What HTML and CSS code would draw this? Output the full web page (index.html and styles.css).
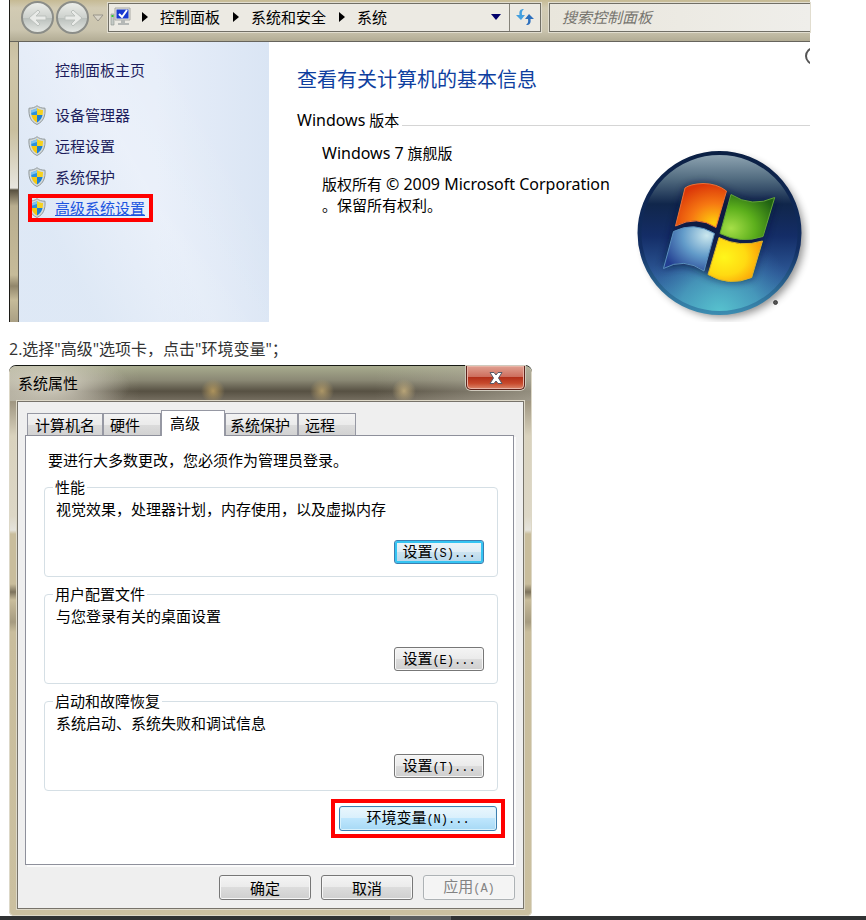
FILE: index.html
```html
<!DOCTYPE html>
<html lang="zh-CN">

<head>
    <meta charset="UTF-8">
    <meta name="viewport" content="width=device-width, initial-scale=1.0">
    <title>环境变量设置</title>
    <link rel="stylesheet" href="styles.css">
</head>

<body>

    <!-- 盾牌图标 -->
    <svg class="defs" width="0" height="0" aria-hidden="true">
        <symbol id="shield" viewBox="0 0 18 20">
            <clipPath id="shieldClip">
                <path d="M9 3 C7 4.500 5 5 3 5 C3 11 4.500 15 9 17.500 C13.500 15 15 11 15 5 C13 5 11 4.500 9 3Z"/>
            </clipPath>
            <path d="M9 .7 C7 2.500 4 3.200 1 3.200 C.5 11 2.500 16.500 9 19.500 C15.500 16.500 17.500 11 17 3.200 C14 3.200 11 2.500 9 .7Z" fill="#d3d9da" stroke="#929a9b"/>
            <g clip-path="url(#shieldClip)">
                <path d="M0 0h9v10H0z" fill="#2b91dc"/>
                <path d="M9 0h9v10H9z" fill="#f6d21f"/>
                <path d="M0 10h9v10H0z" fill="#f4c80f"/>
                <path d="M9 10h9v10H9z" fill="#1d7fd0"/>
                <path d="M3 3 L9 2 V6 L3 8Z" fill="#a4d8f7" opacity=".7"/>
            </g>
        </symbol>
    </svg>

    <div class="article">
        <!-- 系统窗口 -->
        <section class="system">
            <div class="toolbar">
                <button class="nav-button" type="button" aria-label="后退">
                    <svg width="32" height="32" viewBox="0 0 32 32">
                        <path d="M7 16 L16 8 L18 10 L14 14 H24 V18 H14 L18 22 L16 24Z" fill="#e9ebe8" stroke="#bcc1bd"/>
                    </svg>
                </button>
                <button class="nav-button" type="button" aria-label="前进">
                    <svg width="32" height="32" viewBox="0 0 32 32">
                        <path d="M25 16 L16 8 L14 10 L18 14 H8 V18 H18 L14 22 L16 24Z" fill="#e9ebe8" stroke="#bcc1bd"/>
                    </svg>
                </button>
                <button class="history" type="button" aria-label="最近的页面">
                    <svg width="12" height="8" viewBox="0 0 12 8">
                        <path d="M1 1h10L6 7z" fill="#d9d5c8" stroke="#99958a"/>
                    </svg>
                </button>
                <nav class="address">
                    <svg class="computer" width="22" height="20" viewBox="0 0 22 20">
                        <path d="M1 7h3v11H1z" fill="#c5cac7" stroke="#8d938f" stroke-width=".6"/>
                        <path d="M1.500 8h2v2h-2z" fill="#3c3"/>
                        <path d="M5 1h15v12H5z" fill="#e2e3de" stroke="#a9aaa5"/>
                        <path d="M6.500 2.500h12v9h-12z" fill="#1739d1"/>
                        <path d="M9 7l3 3 5-7" fill="none" stroke="#fff" stroke-width="2"/>
                        <path d="M11 13h4v3h4v2H8v-2h3z" fill="#b5b8b6"/>
                    </svg>
                    <svg class="arrow" width="6" height="10" viewBox="0 0 6 10"><path d="M0 0l6 5-6 5z"/></svg>
                    <a href="#">控制面板</a>
                    <svg class="arrow" width="6" height="10" viewBox="0 0 6 10"><path d="M0 0l6 5-6 5z"/></svg>
                    <a href="#">系统和安全</a>
                    <svg class="arrow" width="6" height="10" viewBox="0 0 6 10"><path d="M0 0l6 5-6 5z"/></svg>
                    <a href="#">系统</a>
                    <button class="drop" type="button" aria-label="以前的位置">
                        <svg width="10" height="6" viewBox="0 0 10 6"><path d="M0 0h10L5 6z" fill="#00006b"/></svg>
                    </button>
                    <button class="refresh" type="button" aria-label="刷新">
                        <svg width="18" height="18" viewBox="0 0 18 18">
                            <path d="M8 1 C4 1 3 3 3.500 7 H0 L5 12 L9 7 H6 C5.500 4 6 3 8 1Z" fill="#43a0df"/>
                            <path d="M10 17 C14 17 15 15 14.500 11 H18 L13 6 L9 11 H12 C12.500 14 12 15 10 17Z" fill="#2c6fbd"/>
                        </svg>
                    </button>
                </nav>
                <input class="search" type="search" placeholder="搜索控制面板" aria-label="搜索控制面板">
            </div>

            <div class="system-body">
                <aside class="sidebar">
                    <a class="home" href="#">控制面板主页</a>
                    <ul>
                        <li><a href="#"><svg width="18" height="20"><use href="#shield"/></svg>设备管理器</a></li>
                        <li><a href="#"><svg width="18" height="20"><use href="#shield"/></svg>远程设置</a></li>
                        <li><a href="#"><svg width="18" height="20"><use href="#shield"/></svg>系统保护</a></li>
                        <li><a class="marked" href="#"><svg width="18" height="20"><use href="#shield"/></svg><span>高级系统设置</span></a></li>
                    </ul>
                </aside>
                <div class="info">
                    <h1>查看有关计算机的基本信息</h1>
                    <h2><span class="latin">Windows</span> 版本</h2>
                    <div class="edition">
                        <div class="edition-text">
                            <p><span class="latin">Windows 7</span> 旗舰版</p>
                            <p>版权所有 <span class="latin">© 2009 Microsoft Corporation</span><br>。保留所有权利。</p>
                        </div>
                        <svg class="logo" width="180" height="180" viewBox="0 0 180 180" role="img" aria-label="Windows">
                            <defs>
                                <linearGradient id="orb" x1="0" y1="0" x2="0" y2="1">
                                    <stop offset="0" stop-color="#94a9b6"/>
                                    <stop offset=".16" stop-color="#536d81"/>
                                    <stop offset=".32" stop-color="#10264b"/>
                                    <stop offset=".52" stop-color="#142d67"/>
                                    <stop offset=".75" stop-color="#2c5795"/>
                                    <stop offset="1" stop-color="#3f8fb8"/>
                                </linearGradient>
                                <radialGradient id="glow" cx=".5" cy="1" r=".5">
                                    <stop offset="0" stop-color="#58c4cf"/>
                                    <stop offset=".5" stop-color="#4da6c2" stop-opacity=".7"/>
                                    <stop offset="1" stop-color="#3a70ac" stop-opacity="0"/>
                                </radialGradient>
                                <linearGradient id="rim" x1="0" y1="0" x2="0" y2="1">
                                    <stop offset="0" stop-color="#0b2044"/>
                                    <stop offset=".6" stop-color="#122e63"/>
                                    <stop offset="1" stop-color="#3b8bb0"/>
                                </linearGradient>
                                <radialGradient id="red" cx=".75" cy=".9" r=".9">
                                    <stop offset="0" stop-color="#ffd00c"/>
                                    <stop offset=".5" stop-color="#f67812"/>
                                    <stop offset="1" stop-color="#db3709"/>
                                </radialGradient>
                                <radialGradient id="green" cx=".2" cy=".75" r=".9">
                                    <stop offset="0" stop-color="#a6df48"/>
                                    <stop offset=".5" stop-color="#5caf1c"/>
                                    <stop offset="1" stop-color="#216313"/>
                                </radialGradient>
                                <radialGradient id="blue" cx=".85" cy=".2" r=".95">
                                    <stop offset="0" stop-color="#cbe8ee"/>
                                    <stop offset=".5" stop-color="#629bc9"/>
                                    <stop offset="1" stop-color="#233f91"/>
                                </radialGradient>
                                <radialGradient id="yellow" cx=".3" cy=".45" r=".8">
                                    <stop offset="0" stop-color="#fff61b"/>
                                    <stop offset=".5" stop-color="#ffda12"/>
                                    <stop offset="1" stop-color="#fa8d05"/>
                                </radialGradient>
                                <filter id="soft" x="-20%" y="-20%" width="140%" height="140%"><feGaussianBlur stdDeviation="4"/></filter>
                            </defs>
                            <circle cx="94" cy="95" r="80" fill="#000" opacity=".45" filter="url(#soft)"/>
                            <circle cx="89.500" cy="91" r="80.500" fill="url(#orb)"/>
                            <circle cx="89.500" cy="91" r="80.500" fill="url(#glow)"/>
                            <circle cx="89.500" cy="91" r="80" fill="none" stroke="url(#rim)" stroke-width="4"/>
                            <g filter="url(#soft)" fill="#07163c" opacity=".75">
                                <path d="M55 46 Q76 36 97 50 Q122 66 145 56 L122 136 Q100 144 78 133 Q54 117 33 127Z"/>
                            </g>
                            <path d="M55 46 Q60 42 73 41.500 Q87 41.500 96.500 49 L86 85.500 Q67 73 45.500 84Z" fill="url(#red)" stroke="#ed7137"/>
                            <path d="M101 52.500 Q122 66 144.700 55.500 L133 94.500 Q111 102 90 91.500Z" fill="url(#green)" stroke="#63a535"/>
                            <path d="M43.500 89.500 Q64 79 84.500 91.500 L74 129 Q54 115 33.500 126.500Z" fill="url(#blue)" stroke="#598fbd"/>
                            <path d="M89 95.500 Q110 106 132.500 99 L121.700 135.500 Q99 145 78 132.500Z" fill="url(#yellow)" stroke="#d9b529"/>
                            <circle cx="145.500" cy="160.500" r="2" fill="#555" stroke="#222" stroke-width=".7"/>
                        </svg>
                    </div>
                </div>
            </div>
        </section>

        <p class="step">2.选择"高级"选项卡，点击"环境变量"；</p>

        <!-- 系统属性对话框 -->
        <section class="dialog">
            <header class="titlebar">
                <h2>系统属性</h2>
                <button class="close" type="button" aria-label="关闭">
                    <svg width="16" height="14" viewBox="0 0 16 14">
                        <path d="M2 1.500h4l2 2.500 2-2.500h4L10.500 7l3.500 5.500h-4L8 10l-2 2.500H2L5.500 7z" fill="#fff" stroke="#565a68"/>
                    </svg>
                </button>
            </header>
            <form class="client">
                <div class="tabs" role="tablist">
                    <button class="tab tab-name" type="button" role="tab">计算机名</button>
                    <button class="tab tab-hardware" type="button" role="tab">硬件</button>
                    <button class="tab tab-advanced active" type="button" role="tab" aria-selected="true">高级</button>
                    <button class="tab tab-protect" type="button" role="tab">系统保护</button>
                    <button class="tab tab-remote" type="button" role="tab">远程</button>
                </div>
                <div class="panel" role="tabpanel">
                    <p class="intro">要进行大多数更改，您必须作为管理员登录。</p>
                    <fieldset>
                        <legend>性能</legend>
                        <p>视觉效果，处理器计划，内存使用，以及虚拟内存</p>
                        <button class="button focused" type="button">设置<span class="key">(S)...</span></button>
                    </fieldset>
                    <fieldset>
                        <legend>用户配置文件</legend>
                        <p>与您登录有关的桌面设置</p>
                        <button class="button" type="button">设置<span class="key">(E)...</span></button>
                    </fieldset>
                    <fieldset>
                        <legend>启动和故障恢复</legend>
                        <p>系统启动、系统失败和调试信息</p>
                        <button class="button" type="button">设置<span class="key">(T)...</span></button>
                    </fieldset>
                    <div class="env">
                        <button class="button hover" type="button">环境变量<span class="key">(N)...</span></button>
                    </div>
                </div>
                <div class="actions">
                    <button class="button" type="button">确定</button>
                    <button class="button" type="button">取消</button>
                    <button class="button" type="button" disabled>应用<span class="key">(A)</span></button>
                </div>
            </form>
        </section>
    </div>

    <footer class="bottom-bar"><span></span></footer>

</body>

</html>
```

FILE: styles.css
```css
* {
    box-sizing: border-box;
}

body {
    margin: 0;
    background: #fff;
    color: #000;
    font-family: "Noto Sans", "Noto Sans CJK SC", sans-serif;
    font-size: 15px;
    line-height: 20px;
}

h1, h2, p, ul {
    margin: 0;
    padding: 0;
    font-weight: normal;
}

button, input {
    padding: 0;
    font: inherit;
    color: inherit;
}

svg {
    display: block;
    flex: none;
}

a {
    color: inherit;
    text-decoration: none;
}

.defs {
    position: absolute;
}

.article {
    padding: 0 56px 0 9px;
}

/* Окно "система" */
.system {
    padding-left: 8px;
    border-left: 1px solid #1c1b17;
    background: linear-gradient(#b9ae8d 0, #cfc6a9 60px, #c9bf9e 130px, #e8e6df 188px, #57503f 190px, #b9ae8f 206px, #c6bb99 275px, #91866b 286px, #c6bb99 300px, #aaa084 100%);
}

.toolbar {
    display: flex;
    align-items: center;
    height: 42px;
    margin-left: -8px;
    padding: 0 0 7px 11px;
    border-bottom: 1px solid #66645c;
    background: linear-gradient(#c6ba94 0, #d2cbb3 8px, #cbc5af 30px, #b2ac94 100%);
}

.nav-button {
    width: 33px;
    height: 33px;
    margin-right: 2px;
    border: 2px solid #8b8d88;
    border-radius: 50%;
    background: linear-gradient(#eceeea, #cdd1cd 50%, #b9bfbb 51%, #e4e7e3);
}

.nav-button svg {
    margin: -1px;
}

.history {
    margin: 2px 4px 0 1px;
    border: 0;
    background: none;
}

.address {
    display: flex;
    flex: 0 1 433px;
    align-items: center;
    height: 29px;
    border: 1px solid #716f66;
    outline: 1px solid #e1ddcf;
    background: #eceae3;
    white-space: nowrap;
}

.computer {
    margin-left: 1px;
}

.arrow {
    margin: 0 12px 0 10px;
}

.address a + .arrow {
    margin: 0 12px 0 13px;
}

.drop {
    width: 26px;
    margin-left: auto;
    border: 0;
    background: none;
}

.drop svg,
.refresh svg {
    margin: 0 auto;
}

.refresh {
    width: 31px;
    height: 27px;
    border: 0;
    border-left: 1px solid #85837a;
    background: none;
}

.search {
    flex: 1;
    min-width: 0;
    height: 29px;
    margin-left: 8px;
    padding-left: 12px;
    border: 1px solid #716f66;
    border-right: 0;
    border-radius: 0;
    outline: 1px solid #e1ddcf;
    background: linear-gradient(90deg, #e9e6dc, #efeeea);
    font-style: italic;
}

.search::placeholder {
    color: #77756f;
    opacity: 1;
}

.system-body {
    display: flex;
    min-height: 280px;
    border-left: 1px solid #66645c;
    background: #fff;
}

.sidebar {
    flex: 0 0 250px;
    padding: 14px 9px;
    background:
        linear-gradient(62deg, rgba(218, 230, 244, 0.7) 20%, rgba(255, 255, 255, 0.15) 50%, rgba(255, 255, 255, 0) 75%),
        linear-gradient(90deg, #e8eef9, #e7eef9 55%, #dae5f4);
    color: #1e1e5c;
}

.home {
    display: block;
    padding: 4px 0 4px 27px;
}

.sidebar ul {
    margin-top: 17px;
    list-style: none;
}

.sidebar li {
    height: 31px;
}

.sidebar li a {
    position: relative;
    display: inline-flex;
    align-items: center;
    gap: 9px;
    height: 28px;
}

.marked span {
    color: #1c55e0;
    text-decoration: underline;
}

/* красная рамка поверх ссылки */
.marked::after {
    content: "";
    position: absolute;
    inset: 0 -8px 0 0;
    border: 4px solid #f00;
}

.info {
    position: relative;
    flex: 1;
    min-width: 0;
    padding: 24px 0 0 28px;
    overflow: hidden;
}

/* край кнопки справки */
.info::after {
    content: "";
    position: absolute;
    top: 5px;
    right: -13px;
    width: 14px;
    height: 14px;
    border: 2px solid #555;
    border-radius: 50%;
}

.info h1 {
    color: #0f3f9f;
    font-size: 20px;
    line-height: 28px;
}

.info h2 {
    margin-top: 16px;
    font-size: 15px;
    white-space: nowrap;
}

.info h2::after {
    content: "";
    display: inline-block;
    width: 100%;
    margin-left: 3px;
    border-top: 1px solid #d5d5d5;
}

.latin {
    font-size: 16px;
}

.edition {
    display: flex;
    margin-top: 12px;
}

.edition-text {
    flex: 1;
    min-width: 0;
    padding: 1px 0 0 25px;
    line-height: 21px;
    white-space: nowrap;
}

.edition-text p + p {
    margin-top: 10px;
}

.step {
    margin: 15px 0 4px;
    color: #333;
    font-family: "Open Sans", "Noto Sans CJK SC", sans-serif;
    font-size: 16px;
    line-height: 24px;
}

/* Диалог "свойства системы" */
.dialog {
    max-width: 523px;
    padding: 0 8px 7px 8px;
    border-top: 1px solid #171a15;
    border-radius: 7px 7px 5px 5px;
    background: linear-gradient(#b8b79d 0, #a09782 36px, #d9d2bd 70px, #ddd7c6 150px, #e5e3dc 164px, #c9bd9c 168px, #c9bd9c 218px, #7c725c 226px, #c9bd9c 234px, #a69b80 256px, #c9bd9c 266px, #cbc0a0 100%);
    box-shadow: inset 0 0 0 1px #ddd8c7;
}

.titlebar {
    display: flex;
    align-items: flex-start;
    justify-content: space-between;
    height: 35px;
    margin: 0 -7px;
    padding: 0 6px 0 8px;
    border-radius: 6px 6px 0 0;
    background:
        radial-gradient(circle 12px at 203px 25px, rgba(194, 163, 98, 0.8), transparent),
        radial-gradient(circle 12px at 312px 25px, rgba(194, 168, 112, 0.8), transparent),
        radial-gradient(circle 12px at 394px 25px, rgba(205, 182, 130, 0.8), transparent),
        radial-gradient(ellipse 80px 32px at 40px 20px, rgba(222, 218, 204, 0.9), transparent),
        linear-gradient(90deg, #c8c4b299 0, transparent 25%, transparent 70%, #bab5a599 100%),
        linear-gradient(#a8ac8e 0, #8b8975 40%, #575143 72%, #777062 100%);
}

.titlebar h2 {
    margin-top: 7px;
    font-size: 15px;
}

.close {
    width: 59px;
    height: 24px;
    border: 1px solid #5d221b;
    border-top: 0;
    border-radius: 0 0 5px 5px;
    background: linear-gradient(#e0a091, #cd6d5c 48%, #b3301a 50%, #c7492c 75%, #dc876b);
    box-shadow: inset 0 0 0 1px #e9b3a5, 0 0 0 1px #cfcabd;
}

.close svg {
    margin: 0 auto;
}

.client {
    padding: 8px 9px 8px 7px;
    border: 1px solid #77736a;
    outline: 1px solid #ddd8c8;
    background: #efefef;
    font-family: "Noto Sans CJK SC", sans-serif;
}

.tabs {
    display: flex;
    align-items: flex-end;
    height: 25px;
    padding-left: 2px;
}

.tab {
    height: 22px;
    padding: 0 0 0 7px;
    border: 1px solid #9698a3;
    border-bottom: 0;
    background: linear-gradient(#f3f3f3, #ebebeb 50%, #dcdcdc 51%, #d2d2d2);
    line-height: 20px;
    text-align: left;
    white-space: nowrap;
}

.tab + .tab {
    padding-left: 6px;
}

.tab-name {
    width: 76px;
}

.tab-hardware {
    width: 58px;
}

.tab-advanced {
    width: 64px;
}

.tab-protect {
    width: 73px;
}

.tab-remote {
    width: 58px;
}

.tab + .tab-protect {
    padding-left: 4px;
}

.tab.active {
    height: 26px;
    margin-bottom: -1px;
    padding: 0 0 2px 8px;
    background: #fff;
    z-index: 1;
}

.panel {
    padding: 14px 15px 26px 18px;
    border: 1px solid #8e909b;
    background: #fff;
    box-shadow: 2px 2px 0 #fbfbfb;
}

.intro {
    padding-left: 4px;
}

fieldset {
    min-width: 0;
    margin: 7px 0 0;
    padding: 0 13px 12px 11px;
    border: 1px solid #d5dfe5;
    border-radius: 4px;
}

legend {
    margin-left: -3px;
    padding: 0 2px;
}

fieldset p {
    margin-top: 2px;
}

.button {
    height: 25px;
    border: 1px solid #777;
    border-radius: 3px;
    background: linear-gradient(#f4f4f4, #ebebeb 48%, #dcdcdc 50%, #cfcfcf);
    box-shadow: inset 0 0 0 1px #f7f7f7;
    line-height: 20px;
    white-space: nowrap;
}

.key {
    font-family: "Liberation Mono", monospace;
    font-size: 12px;
}

fieldset .button {
    display: block;
    width: 90px;
    height: 24px;
    margin: 21px 0 0 auto;
}

.button.focused {
    border-color: #3c7fb1;
    background: linear-gradient(#eef5f9, #e0edf5 48%, #cce3f0 50%, #b5d6ea);
    box-shadow: inset 0 0 0 2px #35c4f2;
}

.button.hover {
    width: 100%;
    border-color: #3c7fb1;
    background: linear-gradient(#eaf6fd, #d9f0fc 48%, #bee6fd 50%, #a7d9f5);
    box-shadow: inset 0 0 0 1px #d8f1fc;
}

.button:disabled {
    border-color: #adb2b5;
    background: #f4f4f4;
    color: #838383;
}

.env {
    width: 174px;
    margin: 8px -7px 0 auto;
    padding: 3px 4px;
    border: 4px solid #f00;
}

.actions {
    display: flex;
    justify-content: flex-end;
    gap: 10px;
    margin: 10px -1px 0 0;
}

.actions .button {
    width: 92px;
}

.bottom-bar {
    height: 4px;
    background: #303233;
}

.bottom-bar span {
    display: block;
    width: 61px;
    height: 4px;
    margin-left: 45%;
    background: #5c5e5f;
}
```
